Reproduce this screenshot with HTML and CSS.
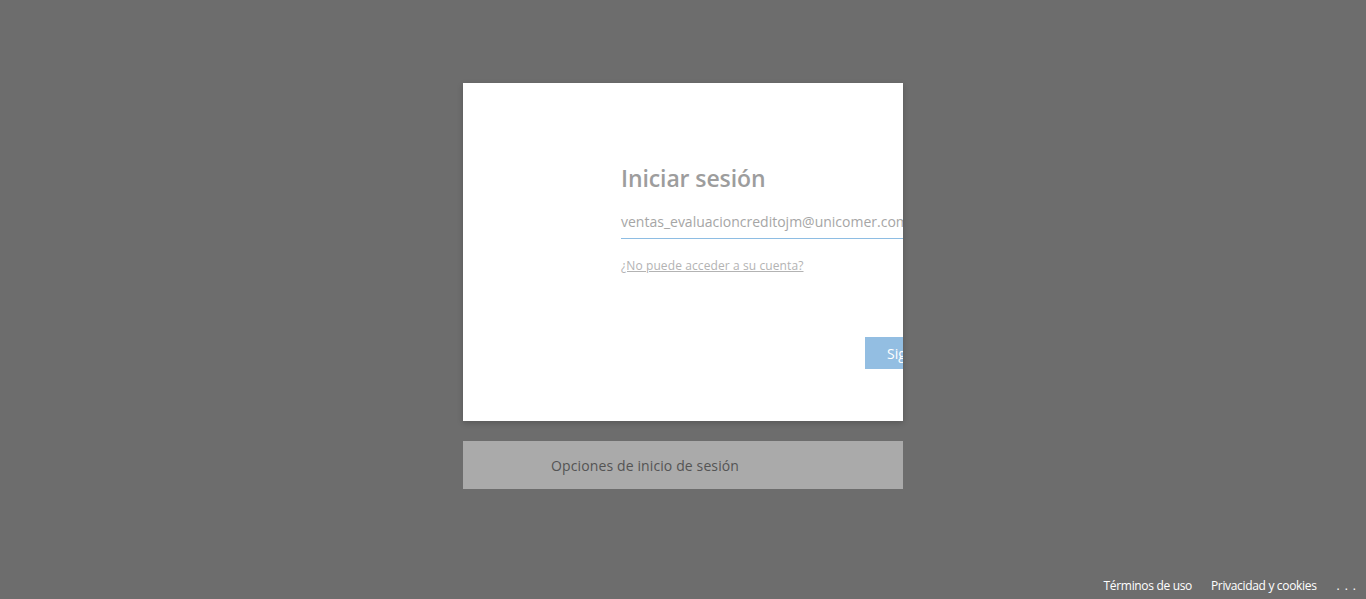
FILE: index.html
```html
<!DOCTYPE html>
<html lang="es">
<head>
<meta charset="utf-8">
<title>Iniciar sesión</title>
<link rel="stylesheet" href="styles.css">
</head>
<body>
<main class="page">
  <section class="card">
    <div class="card-inner">
      <h1 class="title">Iniciar sesión</h1>
      <div class="field">ventas_evaluacioncreditojm@unicomer.com</div>
      <a class="link" href="#">¿No puede acceder a su cuenta?</a>
      <div class="actions">
        <button class="btn" type="button">Siguiente</button>
      </div>
    </div>
  </section>
  <section class="options">
    <span class="options-text">Opciones de inicio de sesión</span>
  </section>
</main>
<footer class="footer">
  <a href="#" class="foot-link">Términos de uso</a>
  <a href="#" class="foot-link">Privacidad y cookies</a>
  <a href="#" class="foot-link dots">...</a>
</footer>
</body>
</html>
```
FILE: styles.css
```css
html, body {
  margin: 0;
  padding: 0;
  height: 100%;
}
body {
  background: #6d6d6d;
  font-family: "Open Sans", "Noto Sans", "Liberation Sans", sans-serif;
  overflow: hidden;
  position: relative;
}
.page {
  display: flex;
  flex-direction: column;
  align-items: center;
  padding-top: 83px;
}
.card {
  width: 440px;
  height: 338px;
  background: #ffffff;
  box-shadow: 0 2px 6px rgba(0, 0, 0, 0.2);
  overflow: hidden;
  box-sizing: border-box;
  padding: 79px 0 0 158px;
}
.card-inner {
  width: 352px;
  display: flex;
  flex-direction: column;
}
.title {
  margin: 0;
  font-size: 23px;
  line-height: 32px;
  font-weight: 600;
  color: #9d9d9d;
  letter-spacing: -0.1px;
}
.field {
  margin-top: 18px;
  font-size: 14px;
  line-height: 20px;
  padding-bottom: 6px;
  color: #a6a6a6;
  border-bottom: 1px solid #8ebde3;
  white-space: nowrap;
  overflow: visible;
  letter-spacing: 0;
}
.link {
  margin-top: 19px;
  font-size: 12px;
  line-height: 16px;
  color: #b3b3b3;
  text-decoration: underline;
  align-self: flex-start;
  letter-spacing: 0.1px;
}
.actions {
  display: flex;
  justify-content: flex-end;
  margin-top: 63px;
}
.btn {
  width: 108px;
  height: 32px;
  border: none;
  background: #93bee2;
  color: #ffffff;
  font-family: inherit;
  font-size: 14px;
  padding: 0 0 0 3px;
  text-align: left;
  text-indent: 19px;
}
.options {
  margin-top: 20px;
  width: 440px;
  height: 48px;
  background: #aaaaaa;
  box-sizing: border-box;
  padding-left: 88px;
  display: flex;
  align-items: center;
}
.options-text {
  font-size: 14px;
  color: #545454;
  letter-spacing: 0.12px;
}
.footer {
  position: absolute;
  right: 0;
  bottom: 0;
  display: flex;
  align-items: center;
  height: 28px;
  padding-right: 8px;
}
.foot-link {
  color: #ffffff;
  font-size: 12px;
  text-decoration: none;
  margin-left: 19px;
  letter-spacing: -0.33px;
}
.dots {
  letter-spacing: 5px;
  margin-left: 20px;
  margin-right: -3px;
}
```
